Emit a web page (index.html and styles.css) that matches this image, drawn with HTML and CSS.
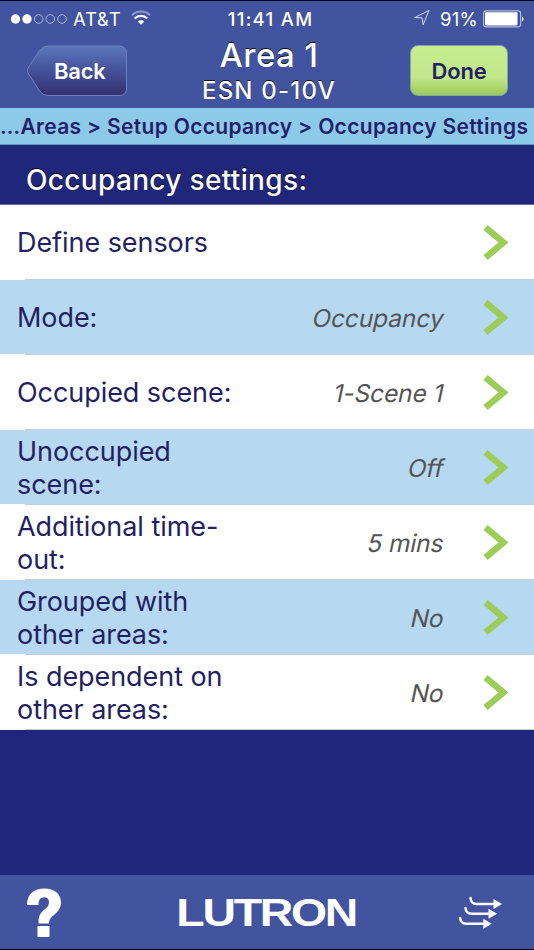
FILE: index.html
```html
<!DOCTYPE html>
<html lang="en">
<head>
<meta charset="utf-8">
<title>Occupancy Settings</title>
<link rel="stylesheet" href="styles.css">
</head>
<body>
<div class="app">
  <header class="header">
    <div class="status">
      <div class="carrier">
        <svg width="58" height="12" viewBox="0 0 58 12"><g fill="#fff"><circle cx="5.500" cy="6" r="4.700"/><circle cx="17" cy="6" r="4.700"/></g><g fill="none" stroke="#b4bcdd" stroke-width=".9"><circle cx="28.700" cy="6" r="4.300"/><circle cx="40.300" cy="6" r="4.300"/><circle cx="52" cy="6" r="4.300"/></g></svg>
        <span class="carrier-name">AT&amp;T</span>
        <svg class="wifi" width="20" height="16" viewBox="0 0 22 17"><path d="M1 5.400a14.300 14.300 0 0 1 20 0" fill="none" stroke="#8c99cb" stroke-width="2.200"/><path d="M4.100 9.100a9.800 9.800 0 0 1 13.800 0" fill="none" stroke="#fff" stroke-width="2.400"/><path d="M7.500 12.500a5 5 0 0 1 7 0L11 16z" fill="#fff"/></svg>
      </div>
      <span class="time">11:41 AM</span>
      <div class="power">
        <svg class="locate" width="18" height="18" viewBox="0 0 18 18"><path d="M1.500 8.600L16 1.500 10.100 15.800 9.100 8.800z" fill="none" stroke="#dfe3f2" stroke-width=".9"/></svg>
        <span class="percent">91%</span>
        <svg class="battery" width="41" height="18" viewBox="0 0 41 18"><rect x=".6" y=".9" width="37" height="16" rx="2.500" fill="none" stroke="#b4bcdd" stroke-width="1.100"/><rect x="2" y="2.300" width="32.500" height="13.200" rx="1" fill="#fff"/><path d="M39 6.200q3 2.800 0 5.600z" fill="#fff"/></svg>
      </div>
    </div>
    <div class="nav">
      <a class="back">
        <svg class="back-shape" width="102" height="52" viewBox="0 0 102 52"><defs><linearGradient id="back" x2="0" y2="1"><stop stop-color="#5d77bb"/><stop offset=".45" stop-color="#45559e"/><stop offset="1" stop-color="#35306f"/></linearGradient></defs><path d="M22 1H93q7.500 0 7.500 7.500V43q0 7.500-7.500 7.500H22q-5 0-8-4L2.500 29q-2.300-3.500 0-7L14 5q3-4 8-4z" fill="url(#back)" stroke="#6d80c0"/></svg>
        <span class="back-text">Back</span>
      </a>
      <div class="titles"><h1 class="title">Area 1</h1><p class="subtitle">ESN 0-10V</p></div>
      <a class="done">Done</a>
    </div>
  </header>
  <nav class="crumbs">…Areas &gt; Setup Occupancy &gt; Occupancy Settings</nav>
  <h2 class="section">Occupancy settings:</h2>
  <main class="list">
    <div class="row"><span class="label">Define sensors</span><span class="value"></span><svg class="chev" width="26" height="37" viewBox="0 0 26 37"><path d="M3.500 3.500L21.500 18.500 3.500 33.500" /></svg></div>
    <div class="row"><span class="label">Mode:</span><span class="value">Occupancy</span><svg class="chev" width="26" height="37" viewBox="0 0 26 37"><path d="M3.500 3.500L21.500 18.500 3.500 33.500" /></svg></div>
    <div class="row"><span class="label">Occupied scene:</span><span class="value">1-Scene 1</span><svg class="chev" width="26" height="37" viewBox="0 0 26 37"><path d="M3.500 3.500L21.500 18.500 3.500 33.500" /></svg></div>
    <div class="row"><span class="label">Unoccupied<br>scene:</span><span class="value">Off</span><svg class="chev" width="26" height="37" viewBox="0 0 26 37"><path d="M3.500 3.500L21.500 18.500 3.500 33.500" /></svg></div>
    <div class="row"><span class="label">Additional time-<br>out:</span><span class="value">5 mins</span><svg class="chev" width="26" height="37" viewBox="0 0 26 37"><path d="M3.500 3.500L21.500 18.500 3.500 33.500" /></svg></div>
    <div class="row"><span class="label">Grouped with<br>other areas:</span><span class="value">No</span><svg class="chev" width="26" height="37" viewBox="0 0 26 37"><path d="M3.500 3.500L21.500 18.500 3.500 33.500" /></svg></div>
    <div class="row"><span class="label">Is dependent on<br>other areas:</span><span class="value">No</span><svg class="chev" width="26" height="37" viewBox="0 0 26 37"><path d="M3.500 3.500L21.500 18.500 3.500 33.500" /></svg></div>
  </main>
  <footer class="footer">
    <svg class="help" width="36" height="50" viewBox="0 0 36 50"><path d="M1 18C1 7 8 1.500 18.500 1.500C28.500 1.500 35 7 35 15.500C35 21 32 24.500 28 28C24.500 31 23 32.500 23 36.500H12.500C12.500 29.500 13.500 27 18.500 22.500C21.500 20 23 18.500 23 15C23 12 21 10.300 18 10.300C14.500 10.300 12.500 13 12.500 18zM11.500 39H23.500V50H11.500z" fill="#fff"/></svg>
    <svg class="brand" width="200" height="50" viewBox="0 0 200 50"><text transform="translate(11.300 39) scale(1.190 1)" class="brand-text">LUTRON</text></svg>
    <svg class="flows" width="46" height="33" viewBox="0 0 46 33"><g fill="none" stroke="#fff" stroke-width="2.500" stroke-linecap="round"><path d="M12.500 2q.5 6 6 6h19"/><path d="M7.500 12q.5 5.700 6 5.700h18"/><path d="M2.200 22q.5 5.700 6 5.700h18"/></g><path d="M35.500 3l8.500 5-8.500 5zM30.500 12.700l8.500 5-8.500 5zM25.300 22.700l8.500 5-8.500 5z" fill="#fff"/></svg>
  </footer>
</div>
</body>
</html>
```
FILE: styles.css
```css
* { box-sizing: border-box; }
body { margin: 0; font-family: Inter, "Liberation Sans", sans-serif; }
h1, h2, p { margin: 0; font-weight: 500; }
svg { display: block; flex: none; }
.app { width: 534px; height: 950px; display: flex; flex-direction: column; background: #20267a; border-top: 1px solid #000; border-bottom: 1px solid #000; overflow: hidden; white-space: nowrap; }
.header { height: 107px; background: #42549f; color: #fff; }
.status { height: 35px; padding: 0 10px 0 10px; display: grid; grid-template-columns: 1fr auto 1fr; align-items: center; font-size: 18.500px; line-height: 34px; }
.carrier, .power { display: flex; align-items: center; }
.carrier-name { margin-left: 5px; letter-spacing: .8px; }
.wifi { margin-left: 9px; margin-top: -2px; }
.time { font-weight: 500; font-size: 18.500px; letter-spacing: 1.300px; margin-left: 7px; }
.power { justify-content: flex-end; }
.locate { margin-top: -1px; }
.percent { margin: 0 5px 0 9px; letter-spacing: .3px; }
.nav { height: 72px; display: grid; grid-template-columns: 102px 1fr 98px; padding: 0 26px; }
.back { position: relative; margin-top: 9px; height: 52px; }
.back-text { position: absolute; left: 28px; top: 11px; font-size: 22px; line-height: 30px; font-weight: 600; letter-spacing: -.2px; }
.titles { text-align: center; text-shadow: 0 -1px 0 #111; }
.title { font-size: 33px; line-height: 38px; letter-spacing: .4px; }
.subtitle { font-size: 24px; line-height: 34px; letter-spacing: 1.200px; }
.done { margin-top: 9px; height: 51px; border-radius: 8px; border: 1px solid #85a6a8; background: linear-gradient(#c6ed90, #c1e78a 65%, #9bca57); color: #241f62; font-weight: 600; font-size: 22px; line-height: 50px; letter-spacing: -.2px; text-align: center; }
.crumbs { height: 37px; padding-left: 0; background: #8dc9e9; color: #241f68; border-bottom: 1px solid #6796c1; font-size: 21px; line-height: 37px; font-weight: 600; letter-spacing: .32px; }
.section { height: 60px; padding: 5px 0 0 26px; border-bottom: 1px solid #6569a4; color: #fff; font-size: 28px; line-height: 60px; letter-spacing: .34px; text-shadow: 0 -1px 0 #000; }
.row { height: 75px; display: grid; grid-template-columns: 230px 1fr 26px; align-items: center; padding: 0 26px 0 17px; color: #241f62; background: linear-gradient(90deg, #fff 25px, #c8ccd3 25px) bottom / 100% 1px no-repeat #fff; }
.row:nth-child(even) { background-color: #b6d8f1; }
.label { font-size: 27px; line-height: 33.400px; padding-top: 1px; letter-spacing: -.06px; }
.value { padding-right: 38px; text-align: right; transform: skewX(-12deg); color: #555; font-size: 24.500px; letter-spacing: -.1px; }
.chev { fill: none; stroke: #9bcd58; stroke-width: 6.500px; }
.footer { height: 74px; margin-top: auto; padding: 0 30px 0 26px; display: flex; align-items: center; justify-content: space-between; background: #42549f; }
.help { margin-top: -1px; }
.brand { margin-left: 10px; }
.brand-text { font-family: "Liberation Sans", sans-serif; font-size: 39px; font-weight: 700; letter-spacing: -1.900px; fill: #fff; }
```
